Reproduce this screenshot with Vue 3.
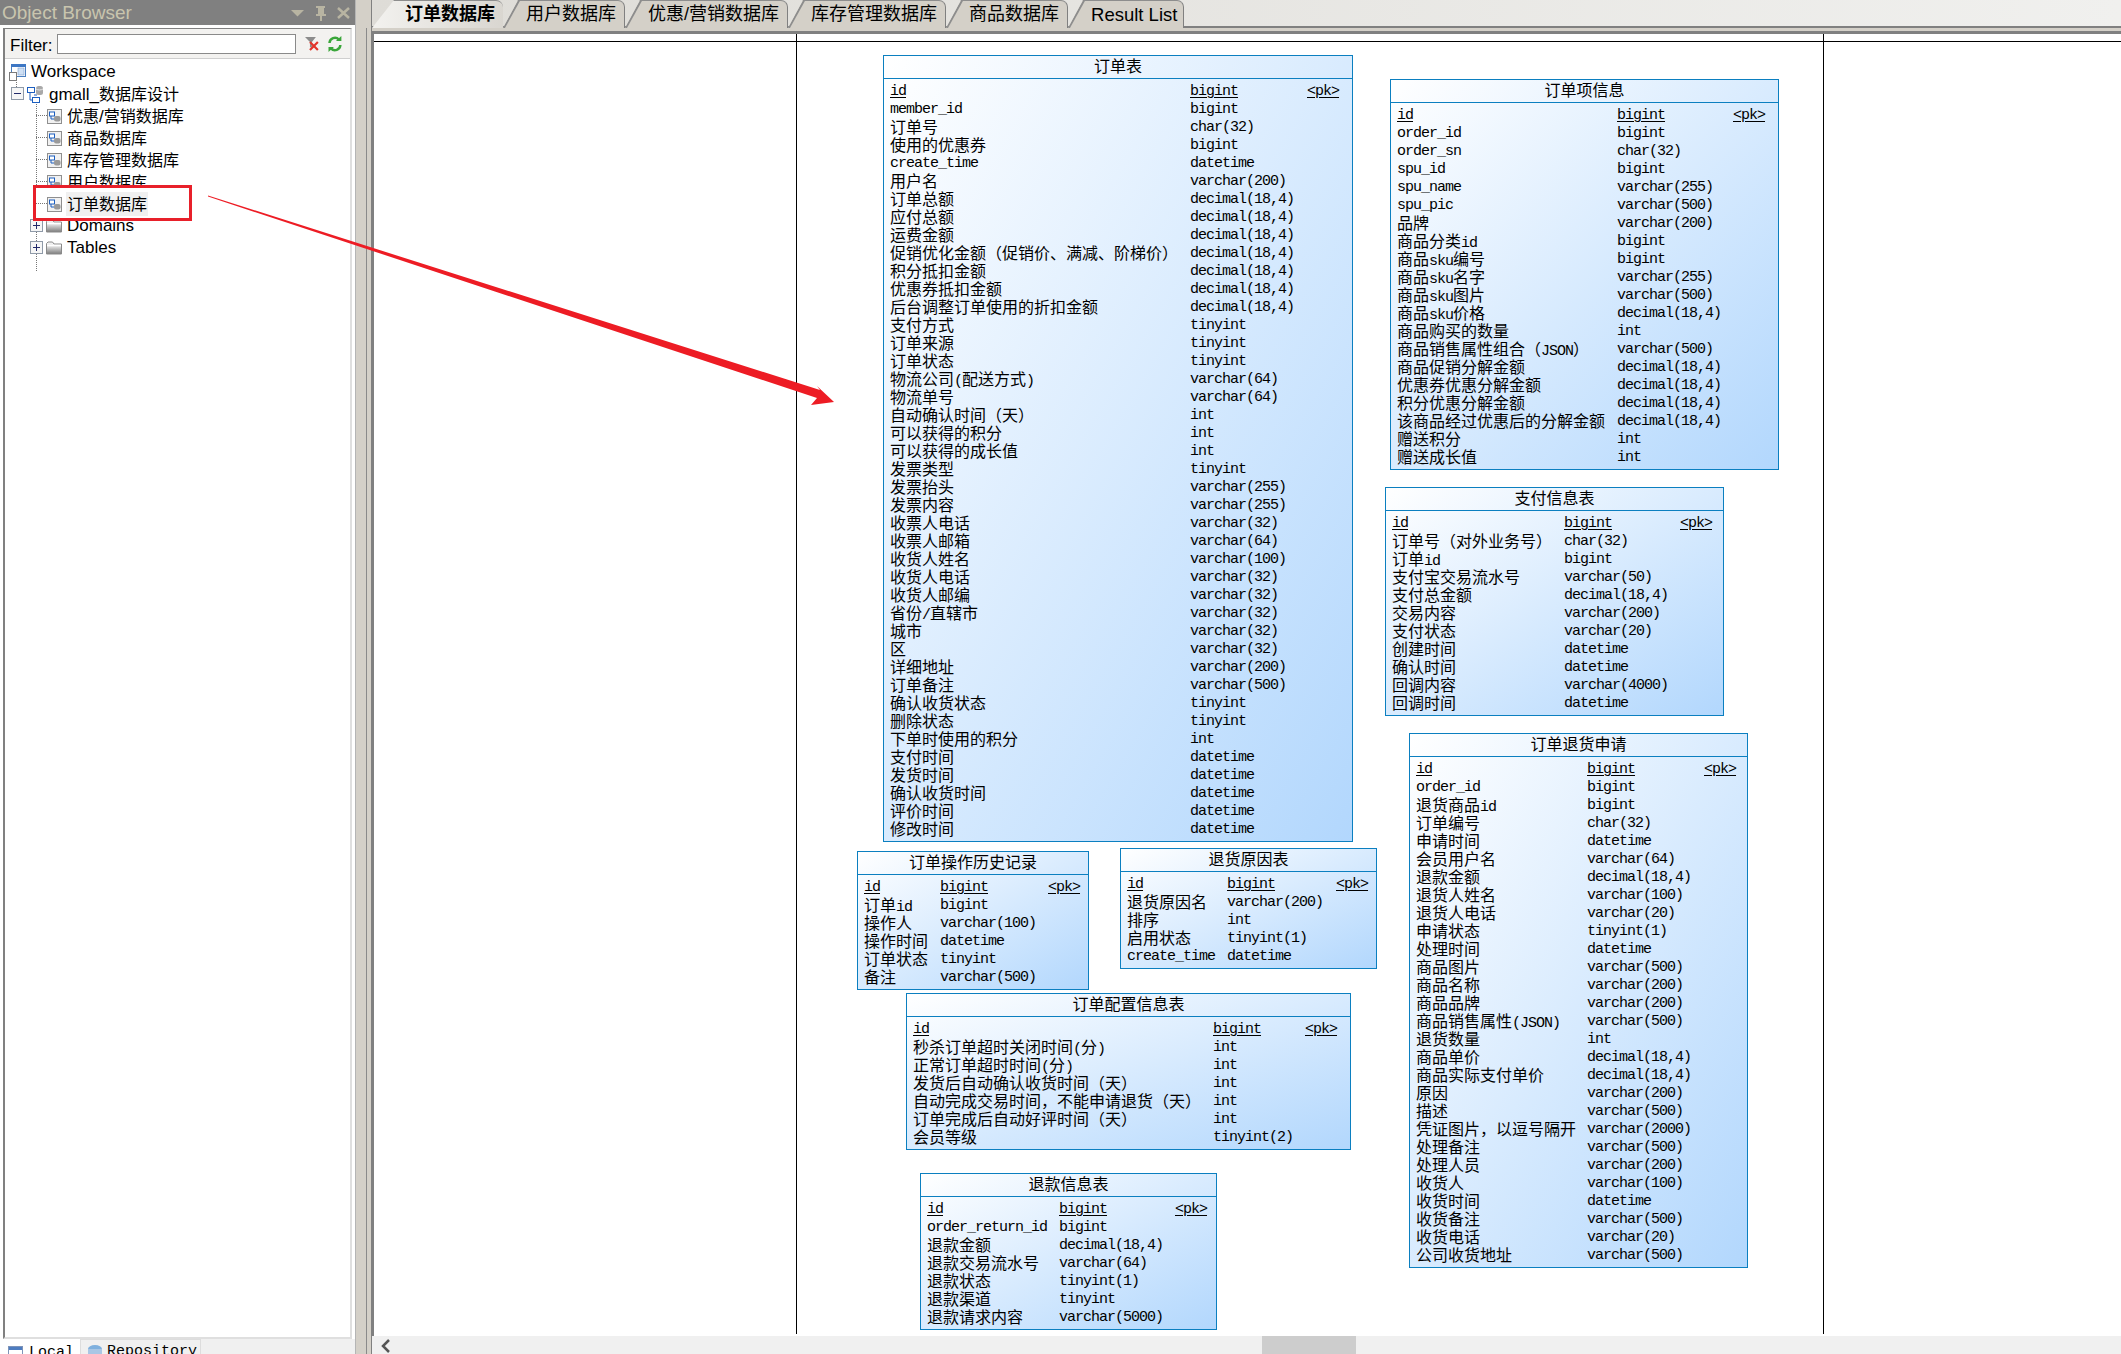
<script setup>
// page coordinates of the canvas origin, entity x/y below are in page pixels
const ORIGIN_X = 372
const ORIGIN_Y = 34

const TABS = [
  { label: '订单数据库', active: true },
  { label: '用户数据库' },
  { label: '优惠/营销数据库' },
  { label: '库存管理数据库' },
  { label: '商品数据库' },
  { label: 'Result List' },
]

const TREE = [
  { label: 'Workspace', icon: 'workspace', indent: 10 },
  { label: 'gmall_数据库设计', icon: 'model', indent: 28, toggle: 'minus' },
  { label: '优惠/营销数据库', icon: 'diagram', indent: 48, stub: true },
  { label: '商品数据库', icon: 'diagram', indent: 48, stub: true },
  { label: '库存管理数据库', icon: 'diagram', indent: 48, stub: true },
  { label: '用户数据库', icon: 'diagram', indent: 48, stub: true },
  { label: '订单数据库', icon: 'diagram', indent: 48, stub: true, selected: true },
  { label: 'Domains', icon: 'folder', indent: 47, toggle: 'plus' },
  { label: 'Tables', icon: 'folder', indent: 47, toggle: 'plus' },
]

const table = (s) => s.trim().split('\n').map((l) => l.trim().split('|'))

const ENTITIES = [
  {
    title: '订单表', x: 883, y: 55, w: 470, c2: 307, c3: 424,
    rows: table(`
      id|bigint
      member_id|bigint
      订单号|char(32)
      使用的优惠券|bigint
      create_time|datetime
      用户名|varchar(200)
      订单总额|decimal(18,4)
      应付总额|decimal(18,4)
      运费金额|decimal(18,4)
      促销优化金额（促销价、满减、阶梯价）|decimal(18,4)
      积分抵扣金额|decimal(18,4)
      优惠券抵扣金额|decimal(18,4)
      后台调整订单使用的折扣金额|decimal(18,4)
      支付方式|tinyint
      订单来源|tinyint
      订单状态|tinyint
      物流公司(配送方式)|varchar(64)
      物流单号|varchar(64)
      自动确认时间（天）|int
      可以获得的积分|int
      可以获得的成长值|int
      发票类型|tinyint
      发票抬头|varchar(255)
      发票内容|varchar(255)
      收票人电话|varchar(32)
      收票人邮箱|varchar(64)
      收货人姓名|varchar(100)
      收货人电话|varchar(32)
      收货人邮编|varchar(32)
      省份/直辖市|varchar(32)
      城市|varchar(32)
      区|varchar(32)
      详细地址|varchar(200)
      订单备注|varchar(500)
      确认收货状态|tinyint
      删除状态|tinyint
      下单时使用的积分|int
      支付时间|datetime
      发货时间|datetime
      确认收货时间|datetime
      评价时间|datetime
      修改时间|datetime
    `),
  },
  {
    title: '订单项信息', x: 1390, y: 79, w: 389, c2: 227, c3: 343,
    rows: table(`
      id|bigint
      order_id|bigint
      order_sn|char(32)
      spu_id|bigint
      spu_name|varchar(255)
      spu_pic|varchar(500)
      品牌|varchar(200)
      商品分类id|bigint
      商品sku编号|bigint
      商品sku名字|varchar(255)
      商品sku图片|varchar(500)
      商品sku价格|decimal(18,4)
      商品购买的数量|int
      商品销售属性组合（JSON）|varchar(500)
      商品促销分解金额|decimal(18,4)
      优惠券优惠分解金额|decimal(18,4)
      积分优惠分解金额|decimal(18,4)
      该商品经过优惠后的分解金额|decimal(18,4)
      赠送积分|int
      赠送成长值|int
    `),
  },
  {
    title: '支付信息表', x: 1385, y: 487, w: 339, c2: 179, c3: 295,
    rows: table(`
      id|bigint
      订单号（对外业务号）|char(32)
      订单id|bigint
      支付宝交易流水号|varchar(50)
      支付总金额|decimal(18,4)
      交易内容|varchar(200)
      支付状态|varchar(20)
      创建时间|datetime
      确认时间|datetime
      回调内容|varchar(4000)
      回调时间|datetime
    `),
  },
  {
    title: '订单退货申请', x: 1409, y: 733, w: 339, c2: 178, c3: 295,
    rows: table(`
      id|bigint
      order_id|bigint
      退货商品id|bigint
      订单编号|char(32)
      申请时间|datetime
      会员用户名|varchar(64)
      退款金额|decimal(18,4)
      退货人姓名|varchar(100)
      退货人电话|varchar(20)
      申请状态|tinyint(1)
      处理时间|datetime
      商品图片|varchar(500)
      商品名称|varchar(200)
      商品品牌|varchar(200)
      商品销售属性(JSON)|varchar(500)
      退货数量|int
      商品单价|decimal(18,4)
      商品实际支付单价|decimal(18,4)
      原因|varchar(200)
      描述|varchar(500)
      凭证图片，以逗号隔开|varchar(2000)
      处理备注|varchar(500)
      处理人员|varchar(200)
      收货人|varchar(100)
      收货时间|datetime
      收货备注|varchar(500)
      收货电话|varchar(20)
      公司收货地址|varchar(500)
    `),
  },
  {
    title: '订单操作历史记录', x: 857, y: 851, w: 232, c2: 83, c3: 191,
    rows: table(`
      id|bigint
      订单id|bigint
      操作人|varchar(100)
      操作时间|datetime
      订单状态|tinyint
      备注|varchar(500)
    `),
  },
  {
    title: '退货原因表', x: 1120, y: 848, w: 257, c2: 107, c3: 216,
    rows: table(`
      id|bigint
      退货原因名|varchar(200)
      排序|int
      启用状态|tinyint(1)
      create_time|datetime
    `),
  },
  {
    title: '订单配置信息表', x: 906, y: 993, w: 445, c2: 307, c3: 399,
    rows: table(`
      id|bigint
      秒杀订单超时关闭时间(分)|int
      正常订单超时时间(分)|int
      发货后自动确认收货时间（天）|int
      自动完成交易时间，不能申请退货（天）|int
      订单完成后自动好评时间（天）|int
      会员等级|tinyint(2)
    `),
  },
  {
    title: '退款信息表', x: 920, y: 1173, w: 297, c2: 139, c3: 255,
    rows: table(`
      id|bigint
      order_return_id|bigint
      退款金额|decimal(18,4)
      退款交易流水号|varchar(64)
      退款状态|tinyint(1)
      退款渠道|tinyint
      退款请求内容|varchar(5000)
    `),
  },
]

// latin runs are half width, CJK runs full width, like the bitmap font of the tool
const segs = (s) =>
  s.split(/([\x00-\x7f]+)/).filter(Boolean).map((t) => ({ t, latin: /^[\x00-\x7f]/.test(t) }))

const boxStyle = (e) => ({
  left: `${e.x - ORIGIN_X}px`,
  top: `${e.y - ORIGIN_Y}px`,
  width: `${e.w}px`,
  '--col1': `${e.c2 - 7}px`,
  '--col2': `${e.c3 - e.c2}px`,
})
</script>

<template>
  <div class="app">
    <aside class="side">
      <div class="side-title">
        <span>Object Browser</span>
        <svg class="title-icons" width="66" height="25" viewBox="0 0 66 25">
          <path d="M4 10h13l-6.500 6.500z" fill="#b8b4a2" />
          <path d="M29 6h9v2h-1v6h2v2h-4v5h-2v-5h-4v-2h2V8h-2z" fill="#b8b4a2" />
          <path d="M51 8l11 10M62 8L51 18" stroke="#b8b4a2" stroke-width="2.500" fill="none" />
        </svg>
      </div>
      <div class="obj">
        <div class="filter">
          <label>Filter:</label>
          <div class="filter-input"></div>
          <svg width="15" height="16" viewBox="0 0 15 16">
            <path d="M0 1h11L7 6v6L5 11V6z" fill="#8c8c8c" />
            <path d="M5 6l8 8M13 6l-8 8" stroke="#e2342a" stroke-width="2.200" />
          </svg>
          <svg width="14" height="16" viewBox="0 0 14 16">
            <path d="M1.500 7A5.500 5.500 0 0 1 11 3.500" stroke="#3aa63a" stroke-width="2.500" fill="none" />
            <path d="M8 5h5.500V0z" fill="#3aa63a" />
            <path d="M12.500 9A5.500 5.500 0 0 1 3 12.500" stroke="#3aa63a" stroke-width="2.500" fill="none" />
            <path d="M6 11H.5v5z" fill="#3aa63a" />
          </svg>
        </div>
        <div class="tree">
          <i class="guide guide-a"></i>
          <i class="guide guide-b"></i>
          <div class="mark"></div>
          <div
            v-for="r in TREE"
            :key="r.label"
            class="tree-row"
            :class="{ selected: r.selected }"
            :style="{ paddingLeft: r.indent - 6 + 'px' }"
          >
            <i v-if="r.stub" class="stub"></i>
            <span v-if="r.toggle" class="toggle" :class="r.toggle"></span>
            <svg v-if="r.icon === 'workspace'" class="ico" width="17" height="17" viewBox="0 0 17 17">
              <rect x="2.500" y=".5" width="14" height="12" fill="#fff" stroke="#4a7fc0" />
              <rect x="2" y="0" width="15" height="3" fill="#3d77c4" />
              <rect x="9" y="4" width="6" height="7" fill="#cfe0f4" stroke="#7d9fcc" stroke-width=".6" />
              <rect x=".5" y="8.500" width="7" height="8" fill="#fff" stroke="#7b7b7b" />
            </svg>
            <svg v-else-if="r.icon === 'model'" class="ico" width="17" height="17" viewBox="0 0 17 17">
              <rect x=".5" y="1.500" width="7" height="5" fill="#fff" stroke="#1d5fc0" />
              <rect x="5.500" y="11.500" width="7" height="5" fill="#fff" stroke="#1d5fc0" />
              <path d="M3 7v7h2.500M7 9h3" stroke="#1d5fc0" fill="none" />
              <rect x="9" y="0" width="7" height="9" rx="2.500" fill="#a9a9a9" />
              <path d="M9 3c2 1.300 5 1.300 7 0" stroke="#e8e8e8" fill="none" />
            </svg>
            <svg v-else-if="r.icon === 'diagram'" class="ico" width="15" height="15" viewBox="0 0 15 15">
              <rect x=".5" y=".5" width="14" height="14" fill="#f1f1f1" stroke="#8f8f8f" />
              <rect x="2.500" y="3" width="5" height="4" fill="#fff" stroke="#1d5fc0" />
              <path d="M4 7v3h3" stroke="#1d5fc0" fill="none" />
              <rect x="7" y="7" width="6.500" height="5.500" rx="2" fill="#9a9a9a" />
            </svg>
            <svg v-else class="ico" width="16" height="14" viewBox="0 0 16 14">
              <defs>
                <linearGradient id="folder-fill" x1="0" y1="0" x2="0" y2="1">
                  <stop offset="0" stop-color="#f8f8f8" />
                  <stop offset=".35" stop-color="#e4e4e4" />
                  <stop offset="1" stop-color="#7d7d7d" />
                </linearGradient>
              </defs>
              <path d="M.5 13V2.500l1.500-1.500h4.500L8 3h7.500v10z" fill="url(#folder-fill)" stroke="#8a8a8a" />
              <path d="M1 4.500h14" stroke="#fff" stroke-width="1.500" />
            </svg>
            <span class="tree-label"><span
              v-for="(s, j) in segs(r.label)"
              :key="j"
              :class="s.latin ? 'tree-la' : 'cj'"
            >{{ s.t }}</span></span>
          </div>
        </div>
      </div>
      <div class="side-tabs">
        <div class="side-tab on">
          <svg width="15" height="15" viewBox="0 0 15 15">
            <rect x=".5" y=".5" width="14" height="14" fill="#fff" stroke="#7d93b8" />
            <rect x="1" y="1" width="13" height="3" fill="#4d7cc0" />
          </svg>
          Local
        </div>
        <div class="side-tab">
          <svg width="16" height="15" viewBox="0 0 16 15">
            <ellipse cx="8" cy="4" rx="7" ry="4" fill="#7fb0de" />
            <rect x="1" y="4" width="14" height="11" fill="#a9c6e4" />
          </svg>
          Repository
        </div>
      </div>
    </aside>

    <div class="split"></div>

    <main class="main">
      <div class="tabs">
        <div v-for="t in TABS" :key="t.label" class="tab" :class="{ active: t.active }">{{ t.label }}</div>
      </div>
      <div class="canvas">
        <i class="frame"></i>
        <i class="rule-h"></i>
        <i class="rule-v rule-a"></i>
        <i class="rule-v rule-b"></i>
        <section v-for="e in ENTITIES" :key="e.title" class="entity" :style="boxStyle(e)">
          <h3 class="entity-title">{{ e.title }}</h3>
          <div class="entity-body">
            <div v-for="(r, i) in e.rows" :key="i" class="field" :class="{ pk: i === 0 }">
              <span class="cell"><span class="u"><span
                v-for="(s, j) in segs(r[0])"
                :key="j"
                :class="s.latin ? 'la' : 'cj'"
              >{{ s.t }}</span></span></span>
              <span class="cell"><span class="u la">{{ r[1] }}</span></span>
              <span v-if="i === 0" class="cell"><span class="u la">&lt;pk&gt;</span></span>
            </div>
          </div>
        </section>
      </div>
      <div class="hscroll">
        <svg class="chev" width="10" height="14" viewBox="0 0 10 14">
          <path d="M8 1L2 7l6 6" stroke="#555" stroke-width="2.500" fill="none" />
        </svg>
        <div class="thumb"></div>
      </div>
    </main>

    <svg class="arrow" width="2121" height="1354" viewBox="0 0 2121 1354">
      <polygon points="208,195.500 820,390 817,386 834,402 811,405 817,398 208,196.500" fill="#ed1c24" />
    </svg>
  </div>
</template>

<style>
html, body { margin: 0; overflow: hidden; background: #fff; }
</style>

<style scoped>
.app {
  position: relative;
  display: flex;
  width: 2121px;
  height: 1354px;
  overflow: hidden;
  font-family: 'Liberation Sans', 'Noto Sans CJK SC', sans-serif;
  color: #000;
}

/* left dock */
.side {
  width: 356px;
  flex: none;
  display: flex;
  flex-direction: column;
  box-sizing: border-box;
  border-right: 1px solid #b5b5b5;
  background: #fff;
}
.side-title {
  height: 25px;
  flex: none;
  display: flex;
  align-items: center;
  justify-content: space-between;
  padding-left: 2px;
  background: #808080;
  color: #c9c5ae;
  font-size: 19px;
}
.title-icons { margin-right: 2px; }
.obj {
  flex: 1;
  display: flex;
  flex-direction: column;
  margin: 3px 3px 0 3px;
  border-left: 2px solid #808080;
  border-top: 1px solid #808080;
  border-right: 2px solid #dfdfdf;
  border-bottom: 2px solid #dfdfdf;
  min-height: 0;
}
.filter {
  height: 30px;
  flex: none;
  box-sizing: border-box;
  display: flex;
  align-items: center;
  padding-left: 5px;
  background: #f3f2f0;
  border-bottom: 1px solid #cfcfcf;
  font-size: 17px;
}
.filter label { width: 47px; margin-top: 5px; }
.filter-input {
  width: 242px;
  height: 20px;
  box-sizing: border-box;
  border: 1px solid #8a8a8a;
  background: #fff;
  margin-right: 9px;
}
.filter svg { margin-right: 8px; }

.tree {
  position: relative;
  flex: 1;
  padding-top: 2px;
}
.tree-row {
  position: relative;
  height: 22px;
  display: flex;
  align-items: center;
  white-space: nowrap;
}
.tree-row.selected { z-index: 2; }
.ico { flex: none; margin-right: 4px; }
.tree-label { padding: 0 1px; line-height: 22px; }
.tree-la { font-size: 17px; }
.selected .tree-label { background: #f0f0f0; }
.stub {
  position: absolute;
  left: 31px;
  top: 10px;
  width: 11px;
  border-top: 1px dotted #777;
}
.toggle {
  position: absolute;
  top: 4px;
  width: 13px;
  height: 13px;
  box-sizing: border-box;
  border: 1px solid #8f9aa8;
  background: #f6f6f6;
}
.toggle::before {
  content: '';
  position: absolute;
  left: 2px;
  right: 2px;
  top: 5px;
  height: 1px;
  background: #222a6a;
}
.toggle.minus { left: 6px; }
.toggle.plus { left: 25px; }
.toggle.plus::after {
  content: '';
  position: absolute;
  top: 2px;
  bottom: 2px;
  left: 5px;
  width: 1px;
  background: #222a6a;
}
.guide {
  position: absolute;
  border-left: 1px dotted #777;
}
.guide-a { left: 11px; top: 18px; height: 20px; }
.guide-b { left: 31px; top: 40px; height: 172px; }
.mark {
  position: absolute;
  left: 28px;
  top: 126px;
  width: 159px;
  height: 36px;
  box-sizing: border-box;
  border: 3px solid #e8202a;
  background: #fff;
  z-index: 1;
}

.side-tabs {
  height: 15px;
  flex: none;
  display: flex;
  background: #f0f0f0;
  font-family: 'Liberation Mono', monospace;
  font-size: 15px;
  overflow: hidden;
}
.side-tab {
  display: flex;
  gap: 4px;
  padding: 5px 3px 0 6px;
  border-top: 1px solid #ddd;
  border-right: 1px solid #ddd;
  line-height: 14px;
}
.side-tab.on {
  width: 81px;
  box-sizing: border-box;
  background: #fff;
  border-top: none;
  padding: 7px 4px 0 8px;
  gap: 6px;
}

/* splitter between dock and documents */
.split {
  width: 16px;
  flex: none;
  box-sizing: border-box;
  background: #d4d0c8;
  border-right: 1px solid #808080;
  position: relative;
}
.split::after {
  content: '';
  position: absolute;
  left: 10px;
  top: 28px;
  bottom: 0;
  width: 1px;
  background: #8a8a8a;
}

.main {
  flex: 1;
  min-width: 0;
  display: flex;
  flex-direction: column;
}

/* document tabs */
.tabs {
  height: 26px;
  flex: none;
  display: flex;
  align-items: flex-start;
  border-bottom: 2px solid #808080;
  background: linear-gradient(to right, #dedcd7, #f0f0ee);
  position: relative;
  z-index: 1;
  box-shadow: 0 3px 0 #d4d0c8, 0 6px 0 #808080;
  margin-bottom: 6px;
}
.tab {
  position: relative;
  flex: none;
  height: 28px;
  box-sizing: border-box;
  padding: 0 8px 0 23px;
  background: #d4d0c8;
  border-top: 1px solid #8d8d8d;
  border-right: 1px solid #808080;
  border-top-right-radius: 7px;
  clip-path: polygon(0 100%, 15px 0, 100% 0, 100% 100%);
  font-size: 18px;
  line-height: 27px;
  white-space: nowrap;
}
.tab:last-child { font-size: 18.500px; padding-right: 6px; }
.tab::before {
  content: '';
  position: absolute;
  left: 7px;
  top: -3px;
  width: 1.500px;
  height: 34px;
  background: #8d8d8d;
  transform: rotate(29deg);
}
.tab.active {
  padding-left: 33px;
  font-weight: 700;
  background: linear-gradient(to right, #f3f2ef, #d9d6d0);
  border-right: none;
  clip-path: polygon(0 100%, 22px 0, 100% 0, 100% 100%);
}
.tab.active::before { display: none; }

/* diagram canvas */
.canvas {
  position: relative;
  flex: 1;
  min-height: 0;
  background: #fff;
  overflow: hidden;
}
.frame {
  position: absolute;
  left: 0;
  top: 0;
  bottom: 0;
  width: 2px;
  background: #808080;
}
.rule-h {
  position: absolute;
  left: 2px;
  right: 0;
  top: 7px;
  height: 1px;
  background: #000;
}
.rule-v {
  position: absolute;
  top: 0;
  bottom: 2px;
  width: 1px;
  background: #000;
}
.rule-a { left: 424px; }
.rule-b { left: 1451px; }

.entity {
  position: absolute;
  box-sizing: border-box;
  border: 1px solid #0b7fc0;
  background: linear-gradient(to bottom right, #fff, #b2d7fd);
  font-size: 16px;
}
.entity-title {
  margin: 0;
  height: 22px;
  border-bottom: 1px solid #0b7fc0;
  box-sizing: content-box;
  text-align: center;
  font-size: 16px;
  font-weight: 400;
  line-height: 18px;
  font-family: 'Noto Sans CJK SC', sans-serif;
}
.entity-body { padding: 2px 0 4px 6px; }
.field {
  height: 18px;
  display: grid;
  grid-template-columns: var(--col1) var(--col2) auto;
  line-height: 18px;
  white-space: nowrap;
}
.cell { display: block; overflow: visible; }
.pk .u { text-decoration: underline; text-underline-offset: 2px; }
/* same advance as the tool's 8px half-width latin, but with its taller letters */
.la {
  font-family: 'Liberation Mono', monospace;
  font-size: 15px;
  letter-spacing: -1px;
}
.cj {
  font-family: 'Noto Sans CJK SC', sans-serif;
  font-size: 16px;
}

/* bottom scrollbar */
.hscroll {
  position: relative;
  height: 18px;
  flex: none;
  background: #f0f0f0;
}
.chev { position: absolute; left: 9px; top: 3px; }
.thumb {
  width: 94px;
  height: 18px;
  margin-left: 890px;
  background: #cdcdcd;
}

.arrow {
  position: absolute;
  left: 0;
  top: 0;
  pointer-events: none;
  z-index: 5;
}
</style>
